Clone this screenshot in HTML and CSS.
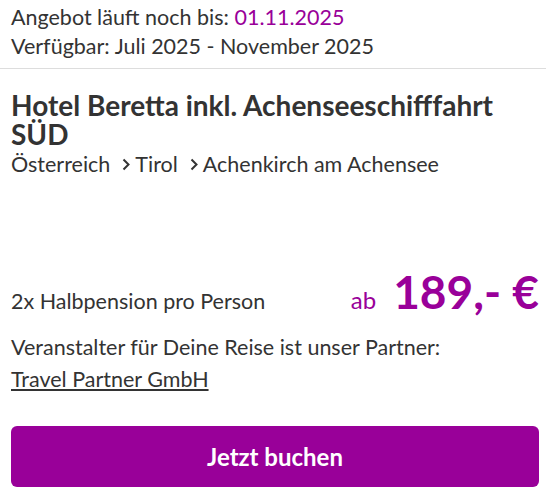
FILE: index.html
```html
<!DOCTYPE html>
<html lang="de">
<head>
  <meta charset="UTF-8" />
  <title>Hotel Beretta</title>
  <link rel="stylesheet" href="styles.css">
</head>
<body>
  <div class="offer">
    <div class="meta">
      <div>Angebot läuft noch bis: <span class="accent">01.11.2025</span></div>
      <div>Verfügbar: Juli 2025 - November 2025</div>
    </div>

    <div class="hotel">
      <h1>Hotel Beretta inkl. Achenseeschifffahrt SÜD</h1>
      <div class="crumbs">
        <span>Österreich</span>
        <svg class="sep" width="8" height="13" viewBox="0 0 8 13"><path d="M1.5 1.5l5 5-5 5" fill="none" stroke="#333" stroke-width="2"/></svg>
        <span>Tirol</span>
        <svg class="sep" width="8" height="13" viewBox="0 0 8 13"><path d="M1.5 1.5l5 5-5 5" fill="none" stroke="#333" stroke-width="2"/></svg>
        <span>Achenkirch am Achensee</span>
      </div>
    </div>

    <div class="price-row">
      <span class="board">2x Halbpension pro Person</span>
      <span class="price"><span class="from">ab</span>189,- €</span>
    </div>

    <div class="partner">
      Veranstalter für Deine Reise ist unser Partner:<br>
      <a href="#">Travel Partner GmbH</a>
    </div>

    <button class="book">Jetzt buchen</button>
  </div>
</body>
</html>
```

FILE: styles.css
```css
body {
  margin: 0;
  font-family: 'Lato', 'Noto Sans', sans-serif;
  color: #333;
  background: #fff;
}
.accent { color: #990099; }
.meta {
  padding: 3px 11px 7px;
  font-size: 21.5px;
  line-height: 29px;
  border-bottom: 1px solid #ddd;
}
.hotel {
  padding: 22px 11px 0;
}
h1 {
  margin: 0;
  font-size: 28px;
  line-height: 29px;
  font-weight: bold;
}
.crumbs {
  display: flex;
  align-items: center;
  font-size: 21.5px;
  line-height: 30px;
}
.crumbs .sep {
  margin: 0 5px 0 12px;
}
.price-row {
  display: flex;
  justify-content: space-between;
  align-items: baseline;
  padding: 0 7px 0 11px;
  margin-top: 86px;
}
.board { font-size: 21.5px; }
.price {
  color: #990099;
  font-size: 46px;
  line-height: 53px;
  font-weight: bold;
}
.price .from {
  font-size: 24px;
  font-weight: normal;
  margin-right: 17px;
}
.partner {
  padding: 0 11px;
  margin-top: 5px;
  font-size: 21.5px;
  line-height: 32px;
}
.partner a { color: #333; }
.book {
  display: block;
  margin: 31px 7px 0 11px;
  width: calc(100% - 18px);
  height: 61px;
  border: none;
  border-radius: 6px;
  background: #990099;
  color: #fff;
  font-family: inherit;
  font-size: 24px;
  font-weight: bold;
  cursor: pointer;
}
```
